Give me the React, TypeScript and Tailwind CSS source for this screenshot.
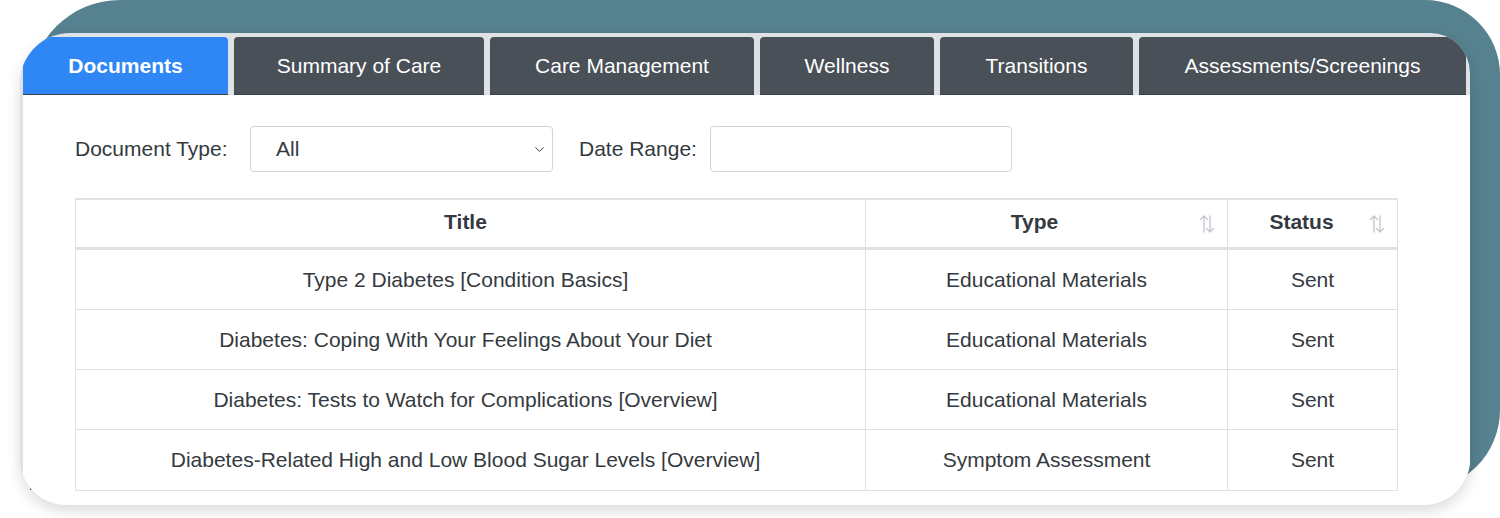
import React from "react";
import { ChevronDown } from "lucide-react";

const tabs = [
  { label: "Documents", w: "w-[205px]", active: true },
  { label: "Summary of Care", w: "w-[250px]" },
  { label: "Care Management", w: "w-[264px]" },
  { label: "Wellness", w: "w-[174px]" },
  { label: "Transitions", w: "w-[193px]" },
  { label: "Assessments/Screenings", w: "w-[327px]" },
];

const rows = [
  ["Type 2 Diabetes [Condition Basics]", "Educational Materials", "Sent"],
  ["Diabetes: Coping With Your Feelings About Your Diet", "Educational Materials", "Sent"],
  ["Diabetes: Tests to Watch for Complications [Overview]", "Educational Materials", "Sent"],
  ["Diabetes-Related High and Low Blood Sugar Levels [Overview]", "Symptom Assessment", "Sent"],
];

function SortIcon() {
  return (
    <svg width="16" height="22" viewBox="0 0 16 22" fill="none" stroke="#c3c8cd" strokeWidth="1.4" strokeLinecap="round" strokeLinejoin="round">
      <path d="M5 19V3M1.5 6.5L5 3l3.5 3.5" />
      <path d="M11 3v16M7.5 15.5L11 19l3.5-3.5" />
    </svg>
  );
}

export default function App() {
  return (
    <div
      className="relative w-[1500px] h-[518px] bg-white overflow-hidden pt-[33px] pl-[20px]"
      style={{ fontFamily: '"Liberation Sans", Arial, Helvetica, sans-serif' }}
    >
      <div className="absolute left-[30px] top-0 right-0 h-[490px] bg-[#56818f] rounded-tl-[90px] rounded-tr-[75px] rounded-br-[80px]" />
      <div className="relative w-[1450px] h-[472px] bg-[#dfe2e5] rounded-tl-[50px] rounded-tr-[40px] rounded-bl-[46px] rounded-br-[46px] overflow-hidden shadow-[0_6px_14px_rgba(0,0,0,0.14)] flex flex-col">
        <div className="flex gap-[6px] pt-[4px] pl-[3px]">
          {tabs.map((t) => (
            <div
              key={t.label}
              className={`${t.w} h-[58px] shrink-0 rounded-t-[4px] flex items-center justify-center text-[21px] text-white border-b border-[#3a4046] ${
                t.active ? "bg-[#2f87f6] font-bold border-[#2f87f6]" : "bg-[#495057]"
              }`}
            >
              {t.label}
            </div>
          ))}
        </div>
        <div className="flex-1 ml-[3px] bg-white pl-[52px] pt-[31px] text-[#343a40]">
          <div className="flex items-center h-[46px] text-[21px]">
            <div className="w-[175px]">Document Type:</div>
            <div className="w-[303px] h-[46px] border border-[#ced4da] rounded-[4px] flex items-center justify-between pl-[25px] pr-[5px]">
              <span>All</span>
              <ChevronDown size={15} strokeWidth={1.6} className="text-[#343a40]" />
            </div>
            <div className="ml-[26px] w-[131px]">Date Range:</div>
            <div className="w-[302px] h-[46px] border border-[#ced4da] rounded-[4px]" />
          </div>
          <div className="mt-[26px] w-[1323px] border border-[#dee2e6] border-t-2 text-[21px]">
            <div className="flex h-[50px] border-b-[3px] border-[#dee2e6] font-bold">
              <div className="w-[790px] flex items-center justify-center border-r border-[#dee2e6] pr-[10px] pb-[4px]">Title</div>
              <div className="w-[362px] flex items-center justify-center relative border-r border-[#dee2e6] pr-[24px] pb-[4px]">
                Type
                <span className="absolute right-[12px] top-[13px]"><SortIcon /></span>
              </div>
              <div className="flex-1 flex items-center justify-center relative pr-[22px] pb-[4px]">
                Status
                <span className="absolute right-[12px] top-[13px]"><SortIcon /></span>
              </div>
            </div>
            {rows.map((r, i) => (
              <div key={i} className={`flex h-[60px] ${i < rows.length - 1 ? "border-b border-[#dee2e6]" : ""}`}>
                <div className="w-[790px] flex items-center justify-center border-r border-[#dee2e6] pr-[10px]">{r[0]}</div>
                <div className="w-[362px] flex items-center justify-center border-r border-[#dee2e6]">{r[1]}</div>
                <div className="flex-1 flex items-center justify-center">{r[2]}</div>
              </div>
            ))}
          </div>
        </div>
      </div>
    </div>
  );
}
